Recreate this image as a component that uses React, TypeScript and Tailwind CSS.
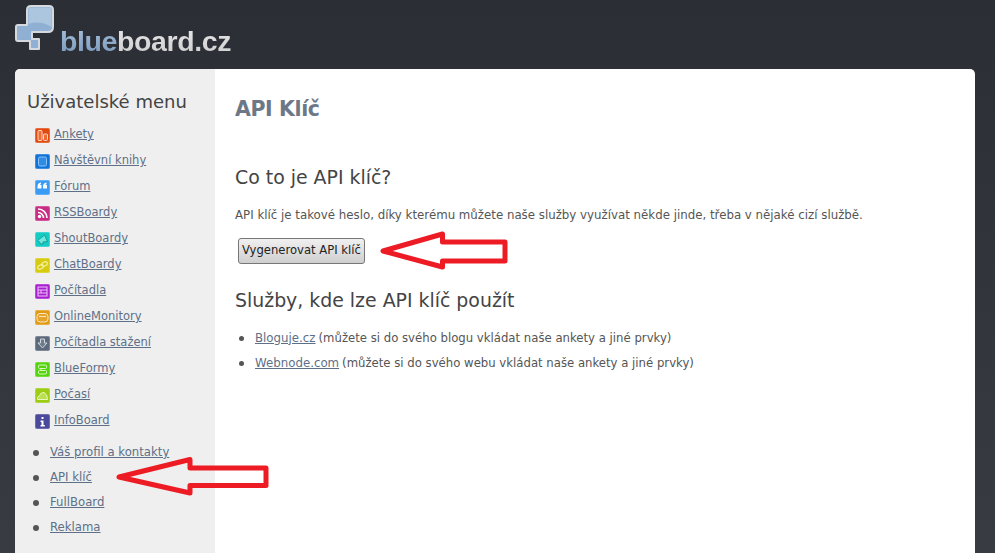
import * as React from "react"

type MenuItem = {
  title: string
  bg: string
  glyph: React.ReactNode
}

const menuItems: MenuItem[] = [
  {
    title: "Ankety",
    bg: "bg-[#e2490f]",
    glyph: (
      <>
        <rect x="3" y="2.500" width="4" height="10" rx="1" fill="#ee6a35" stroke="#ffd9c4" strokeWidth="1" />
        <rect x="8.500" y="6" width="4" height="6.500" rx="1" fill="#ee6a35" stroke="#ffd9c4" strokeWidth="1" />
      </>
    ),
  },
  {
    title: "Návštěvní knihy",
    bg: "bg-[#0f72d8]",
    glyph: <rect x="3.500" y="3" width="8" height="9" rx="1.500" fill="#2f8be6" stroke="#8cc4f6" strokeWidth="1" />,
  },
  {
    title: "Fórum",
    bg: "bg-[#3a9bf5]",
    glyph: (
      <>
        <path d="M2.500 6.500 Q2.500 3 6 2.500 L6 4 Q5 4.500 5 5 L6.500 5 L6.500 8.500 L2.500 8.500 Z" fill="#fff" />
        <path d="M8 6.500 Q8 3 11.500 2.500 L11.500 4 Q10.500 4.500 10.500 5 L12 5 L12 8.500 L8 8.500 Z" fill="#fff" />
      </>
    ),
  },
  {
    title: "RSSBoardy",
    bg: "bg-[#c92c85]",
    glyph: (
      <>
        <circle cx="4.500" cy="10.500" r="1.700" fill="#fff" />
        <path d="M3 6.500 A5.500 5.500 0 0 1 8.500 12" fill="none" stroke="#fff" strokeWidth="1.600" />
        <path d="M3 3 A9 9 0 0 1 12 12" fill="none" stroke="#fff" strokeWidth="1.600" />
      </>
    ),
  },
  {
    title: "ShoutBoardy",
    bg: "bg-[#14ccc4]",
    glyph: <path d="M2.500 8.500 L9.500 3 L12.500 9.500 L8 10 L8 12 L5.500 12 L5 10.500 Z" fill="#6fe6df" stroke="#0a8f8a" strokeWidth="0.800" />,
  },
  {
    title: "ChatBoardy",
    bg: "bg-[#d6cb10]",
    glyph: (
      <>
        <ellipse cx="5.500" cy="9" rx="3" ry="2" fill="none" stroke="#f6f2a0" strokeWidth="1.100" transform="rotate(-25 5.500 9)" />
        <ellipse cx="9.500" cy="6" rx="3" ry="2" fill="none" stroke="#f6f2a0" strokeWidth="1.100" transform="rotate(-25 9.500 6)" />
      </>
    ),
  },
  {
    title: "Počítadla",
    bg: "bg-[#a81fd0]",
    glyph: (
      <>
        <rect x="3" y="3" width="9" height="9" fill="none" stroke="#eec4fa" strokeWidth="1" />
        <path d="M3 6H12M3 9H12M6 6V9" fill="none" stroke="#eec4fa" strokeWidth="1" />
      </>
    ),
  },
  {
    title: "OnlineMonitory",
    bg: "bg-[#e09a14]",
    glyph: (
      <>
        <rect x="2" y="3.500" width="11" height="8.500" rx="3" fill="#e5a32c" stroke="#fbe7bd" strokeWidth="1" />
        <path d="M4 6.500H11" stroke="#fbe7bd" strokeWidth="1" />
      </>
    ),
  },
  {
    title: "Počítadla stažení",
    bg: "bg-[#5d6a7c]",
    glyph: <path d="M5.500 3H9.500V7H12L7.500 12L3 7H5.500Z" fill="#6e7b8d" stroke="#d0d6de" strokeWidth="1" />,
  },
  {
    title: "BlueFormy",
    bg: "bg-[#54d40c]",
    glyph: (
      <>
        <rect x="3.500" y="3" width="8" height="3.500" rx="1" fill="none" stroke="#d6f8c0" strokeWidth="1" />
        <rect x="3.500" y="8.500" width="8" height="3.500" rx="1" fill="none" stroke="#d6f8c0" strokeWidth="1" />
        <path d="M6 6.500V8.500" stroke="#d6f8c0" strokeWidth="1" />
      </>
    ),
  },
  {
    title: "Počasí",
    bg: "bg-[#9ccc14]",
    glyph: <path d="M2.500 11.500 Q2 8.500 4.500 7.500 Q6 4 9 4.500 Q12.500 6 12.500 11.500Z" fill="#b8e050" stroke="#eaf8c0" strokeWidth="1" />,
  },
  {
    title: "InfoBoard",
    bg: "bg-[#4a4a9c]",
    glyph: <path d="M6.500 3H8.500V5H6.500ZM5.500 6.500H8.500V11H9.800V12.500H5.500V11H6.500V8H5.500Z" fill="#fff" />,
  },
]

const accountLinks = ["Váš profil a kontakty", "API klíč", "FullBoard", "Reklama"]

function MenuIcon({ item }: { item: MenuItem }) {
  return (
    <span className={`flex size-[15px] shrink-0 rounded-[2px] ring-1 ring-white/20 ring-inset ${item.bg}`}>
      <svg viewBox="0 0 15 15" className="size-[15px]">
        {item.glyph}
      </svg>
    </span>
  )
}

function Logo() {
  return (
    <div className="relative h-[69px]">
      {/* coordinates are page pixels, the svg starts at 14,4 */}
      <svg viewBox="14 4 42 48" className="absolute top-[4px] left-[14px] h-[48px] w-[42px]">
        <path
          d="M31 6H49Q53 6 53 10V27Q53 32 48 32H32V39H39V49H30V41H18Q16 41 16 39V27Q16 25 18 25H27V10Q27 6 31 6Z"
          fill="#8fb0d3"
          stroke="#d5d8dc"
          strokeWidth="2"
          strokeLinejoin="round"
        />
        <path d="M30 7.500H51.500V27Q40 20 28.500 24V10Q28.500 7.500 30 7.500Z" fill="#adc6df" />
      </svg>
      <div className="absolute top-[23px] left-[60px] font-['Liberation_Sans',sans-serif] text-[28.5px] leading-[36px] font-bold tracking-[-0.4px]">
        <span className="bg-gradient-to-b from-[#a9c1da] to-[#7898bc] bg-clip-text text-transparent">blue</span>
        <span className="bg-gradient-to-b from-[#e8e8e8] to-[#cdcdcd] bg-clip-text text-transparent">board.cz</span>
      </div>
    </div>
  )
}

export default function App() {
  return (
    <div className="relative h-[553px] w-[995px] overflow-hidden bg-gradient-to-b from-[#2b2e35] to-[#383b42] font-['DejaVu_Sans',sans-serif]">
      <Logo />
      <div className="ml-[15px] flex h-[484px] w-[960px] overflow-hidden rounded-t-[5px] bg-white">
        <aside className="w-[200px] shrink-0 bg-[#efefef] pt-[21px] pl-[12px]">
          <h2 className="text-[18px] leading-[24px] text-[#444]">Uživatelské menu</h2>
          <ul className="mt-[8px] ml-[8px]">
            {menuItems.map((item) => (
              <li className="flex h-[26px] items-center gap-[4px] text-[11.5px]" key={item.title}>
                <MenuIcon item={item} />
                <a className="text-[#5e7088] underline" href="#">
                  {item.title}
                </a>
              </li>
            ))}
          </ul>
          <ul className="mt-[6px] ml-[6px]">
            {accountLinks.map((link) => (
              <li className="flex h-[25px] items-center gap-[11px] text-[11.7px]" key={link}>
                <span className="size-[6px] rounded-full bg-[#555]" />
                <a className="text-[#5e7088] underline" href="#">
                  {link}
                </a>
              </li>
            ))}
          </ul>
        </aside>
        <main className="flex-1 pt-[25px] pl-[20px] text-[#555]">
          <h1 className="text-[20.5px] leading-[30px] font-bold tracking-[-0.4px] text-[#6d7886]">API Klíč</h1>
          <h2 className="mt-[40px] text-[18.9px] leading-[26px] text-[#444]">Co to je API klíč?</h2>
          <p className="mt-[17px] text-[11.8px] leading-[16px]">
            API klíč je takové heslo, díky kterému můžete naše služby využívat někde jinde, třeba v nějaké cizí službě.
          </p>
          <button
            className="mt-[15px] ml-[3px] h-[26px] rounded-[3px] border border-[#777] bg-gradient-to-b from-[#f0f0f0] to-[#cfcfcf] px-[3px] text-[11.6px] text-[#222]"
            type="button"
          >
            Vygenerovat API klíč
          </button>
          <h2 className="mt-[23px] text-[18.9px] leading-[26px] text-[#444]">Služby, kde lze API klíč použít</h2>
          <ul className="mt-[13px] text-[11.8px]">
            <li className="flex h-[25px] items-center">
              <span className="mr-[11px] ml-[4px] size-[5px] rounded-full bg-[#555]" />
              <a className="text-[#5e7088] underline" href="#">
                Bloguje.cz
              </a>
              <span className="ml-[3px] text-[11.7px]">(můžete si do svého blogu vkládat naše ankety a jiné prvky)</span>
            </li>
            <li className="flex h-[25px] items-center">
              <span className="mr-[11px] ml-[4px] size-[5px] rounded-full bg-[#555]" />
              <a className="text-[#5e7088] underline" href="#">
                Webnode.com
              </a>
              <span className="ml-[3px] text-[11.7px]">(můžete si do svého webu vkládat naše ankety a jiné prvky)</span>
            </li>
          </ul>
        </main>
      </div>
      <svg viewBox="374 226 138 48" className="absolute top-[226px] left-[374px] h-[48px] w-[138px]">
        <path
          d="M383 251L442.500 234V242H505V261H442.500V267Z"
          fill="none"
          stroke="#ed1c24"
          strokeWidth="5"
          strokeLinejoin="round"
        />
      </svg>
      <svg viewBox="110 452 162 48" className="absolute top-[452px] left-[110px] h-[48px] w-[162px]">
        <path
          d="M119 477L190 459.500V468H266V485.500H190V493Z"
          fill="none"
          stroke="#ed1c24"
          strokeWidth="5"
          strokeLinejoin="round"
        />
      </svg>
    </div>
  )
}
